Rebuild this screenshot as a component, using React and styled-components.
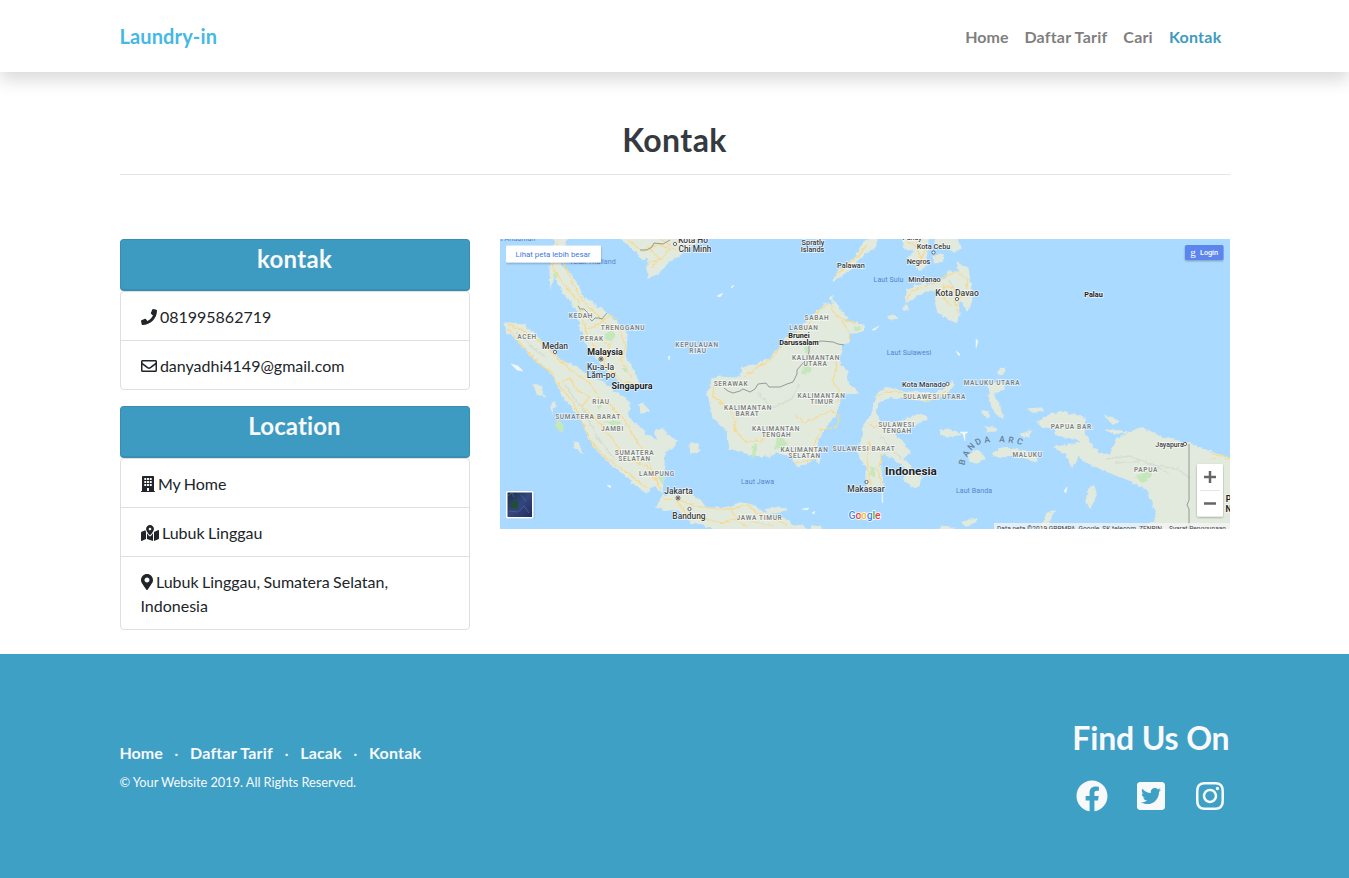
import React from "react";
import styled, { createGlobalStyle } from "styled-components";
import {
  FaPhone, FaRegEnvelope, FaMapMarkedAlt, FaMapMarkerAlt,
  FaFacebook, FaTwitterSquare, FaInstagram,
} from "react-icons/fa";

const GlobalStyle = createGlobalStyle`
  *, *::before, *::after { box-sizing: border-box; }
  body {
    margin: 0;
    background: #fff;
    color: #212529;
    font: 400 16px/1.5 Lato, "Liberation Sans", sans-serif;
    font-variant-ligatures: none;
  }
  a { color: inherit; text-decoration: none; }
`;

const Container = styled.div`
  width: 1140px;
  margin: 0 auto;
  padding: 0 15px;
`;

const Navbar = styled.nav`
  height: 72px;
  background: #fff;
  box-shadow: 0 8px 16px rgba(0, 0, 0, 0.15);
`;

const NavInner = styled(Container)`
  height: 72px;
  display: flex;
  align-items: center;
  justify-content: space-between;
`;

const Brand = styled.a`
  color: #45b8e4;
  font-size: 20px;
  font-weight: 700;
  line-height: 30px;
  letter-spacing: 0.13px;
`;

const NavLinks = styled.div`
  display: flex;
  gap: 16px;
  padding: 2px 8px 0 0;
`;

const NavLink = styled.a`
  font-weight: 700;
  letter-spacing: ${(p) => p.$spacing || 0}px;
  color: ${(p) => (p.$active ? "#3d9bc1" : "#7f7f7f")};
`;

const Title = styled.h2`
  margin: 0;
  padding: 48px 0 14px;
  border-bottom: 1px solid #e5e5e5;
  color: #343a40;
  font-size: 32px;
  font-weight: 700;
  line-height: 40px;
  letter-spacing: 0.4px;
  text-align: center;
`;

const Columns = styled.div`
  display: grid;
  grid-template-columns: 350px 730px;
  gap: 30px;
  align-items: start;
  padding: 64px 0 24px;
`;

const Side = styled.div`
  display: flex;
  flex-direction: column;
  gap: 16px;
`;

const PanelTitle = styled.h4`
  height: 52px;
  margin: 0;
  padding-top: 4px;
  border: 1px solid #378eb1;
  border-bottom-width: 2px;
  border-radius: 4px;
  background: #3d9bc1;
  color: #f8f9fa;
  font-size: 24px;
  line-height: 29px;
  letter-spacing: ${(p) => p.$spacing || 0}px;
  text-align: center;
`;

const List = styled.ul`
  margin: 0;
  padding: 0;
  list-style: none;
  border: 1px solid #dfdfdf;
  border-radius: 4px;
`;

const Item = styled.li`
  padding: 13px 20px 11px;
  word-spacing: -0.7px;
  & + & { border-top: 1px solid #dfdfdf; }
  svg {
    width: ${(p) => p.$icon || 16}px;
    height: 16px;
    vertical-align: -2px;
  }
`;

const MapFrame = styled.div`
  height: 290px;
  overflow: hidden;
  svg { display: block; }
`;

const Footer = styled.footer`
  height: 224px;
  background: #3fa0c6;
  color: #f8f9fa;
`;

const FooterInner = styled(Container)`
  display: flex;
  justify-content: space-between;
  padding-top: 64px;
`;

const FooterLeft = styled.div`
  padding-top: 23px;
`;

const FooterLinks = styled.div`
  display: flex;
  gap: 11.6px;
`;

const FooterLink = styled.a`
  font-weight: 700;
  letter-spacing: ${(p) => p.$spacing || 0}px;
`;

const Copyright = styled.p`
  margin: 7px 0 0;
  font-size: 12.8px;
  line-height: 20px;
  word-spacing: -0.2px;
`;

const Find = styled.h2`
  margin: 0;
  font-size: 32px;
  line-height: 40px;
  font-weight: 700;
  letter-spacing: -0.15px;
  text-align: right;
`;

const Socials = styled.div`
  display: flex;
  justify-content: flex-end;
  gap: 19px;
  margin-top: 22px;
`;

const Social = styled.a`
  width: 40px;
  height: 32px;
  display: flex;
  justify-content: center;
`;

const MapText = styled.text`
  font-family: Roboto, sans-serif;
  font-size: ${(p) => p.$size || 7.6}px;
  font-weight: ${(p) => p.$weight || 500};
  fill: ${(p) => p.$fill || "#3c3c3c"};
  letter-spacing: ${(p) => p.$spacing || 0}px;
  text-anchor: middle;
  paint-order: stroke;
  stroke: ${(p) => p.$halo || "rgba(255,255,255,.7)"};
  stroke-width: 1.5px;
`;

const land = [
  // Thailand and the Malay peninsula
  "M555 239L553 252 550 268 551 288 554 275 562 290 572 303 578 310 580 325 587 345 597 358 610 375 622 383 640 386 634 372 625 357 627 335 620 325 613 320 603 310 592 303 583 298 578 285 568 272 560 265 561 252 567 239Z",
  // Vietnam
  "M622 239L630 246 637 252 642 259 648 258 648 278 660 272 668 262 677 257 690 247 700 239Z",
  // Sumatra
  "M505 323L513 324 523 325 537 337 550 350 563 362 577 367 590 378 603 382 611 390 618 394 630 403 628 417 642 430 648 435 665 447 663 477 662 493 655 485 647 492 637 486 627 477 610 463 597 450 588 437 582 417 572 407 563 397 557 382 547 368 533 358 520 343 507 332Z",
  // Java
  "M657 507L663 495 673 496 687 492 700 500 705 507 732 508 738 502 755 506 762 513 777 517 791 522 791 530 713 530 704 524 690 522 680 511 667 510Z",
  "M765 510L775 508 787 509 780 512 768 513Z",
  // Borneo
  "M712 380L718 377 730 378 741 378 743 368 755 365 768 360 780 348 787 337 800 330 813 315 827 303 832 306 834 300 840 310 847 317 843 322 852 322 863 325 862 332 847 333 850 341 840 343 842 352 837 358 842 366 847 372 848 383 858 393 840 394 837 413 823 430 817 443 819 463 815 459 797 467 793 457 777 452 768 456 753 455 730 448 727 430 713 417 708 393Z",
  // Sulawesi
  "M875 400L878 393 887 388 903 392 937 393 952 382 953 386 945 395 930 401 893 397 880 400 875 412 880 422 897 423 918 415 927 418 917 423 903 430 892 432 900 440 910 452 903 458 911 467 907 475 922 477 917 488 903 480 909 470 900 463 888 455 883 452 880 460 883 487 867 488 867 467 860 458 858 450 863 437 864 425 872 415Z",
  // Mindanao
  "M905 303L908 290 923 283 933 285 947 278 948 272 960 272 957 262 968 268 970 283 973 297 967 310 963 303 957 300 960 313 955 322 938 312 935 300 940 290 927 290 918 294 912 300Z",
  "M903 239L928 239 927 250 925 268 919 270 916 263 908 260 914 250 905 249Z",
  "M935 239L957 239 961 248 954 252 948 246 937 248Z",
  "M933 257L942 254 944 259 936 263Z",
  "M833 280L840 270 847 265 858 254 864 243 869 239 877 239 875 248 868 250 861 257 850 269 839 277Z",
  // New Guinea
  "M1042 427L1043 418 1060 412 1085 418 1083 430 1088 440 1098 453 1110 455 1118 438 1142 428 1163 438 1187 443 1213 453 1231 460 1231 530 1140 530 1155 520 1157 513 1147 490 1130 480 1103 470 1083 460 1079 455 1072 467 1067 455 1055 447 1073 445 1083 440 1057 435 1055 428Z",
  // Halmahera
  "M989 387L994 383 1003 382 1004 389 993 394 998 402 1003 418 996 414 990 400Z",
  // Seram
  "M993 454L1000 448 1011 449 1024 451 1034 454 1037 461 1022 457 1010 455 998 457Z",
  "M968 456L974 451 982 453 984 458 977 463 970 461Z",
  "M941 430L952 431 962 434 951 436 941 435Z",
  "M985 427L994 428 997 431 987 431Z",
  "M1022 434L1031 431 1029 436 1023 437Z",
  "M1028 409L1042 408 1044 411 1034 412Z",
  "M1037 422L1050 416 1052 428 1044 428Z",
  "M1105 416L1113 418 1120 422 1111 423Z",
  "M1106 430L1117 431 1127 432 1117 434Z",
  "M1089 488L1094 486 1096 494 1091 508 1086 502Z",
  "M1042 524L1047 514 1054 511 1049 522 1046 530 1040 530Z",
  "M655 432L663 428 667 436 677 440 673 448 665 450 657 440Z",
  "M534 384L541 387 544 397 537 393Z",
  "M551 405L555 403 556 406 553 408 552 413Z",
  "M574 442L578 444 582 453 578 450Z",
  "M640 404L645 406 648 411 641 413Z",
  "M690 444L698 444 699 451 691 453Z",
  "M902 308L907 305 908 309 904 311Z",
  "M888 317L894 315 897 318 890 319Z",
  "M998 373L1001 368 1005 369 1003 375Z",
  "M982 411L989 412 989 417 984 416Z",
  "M962 523L972 519 977 520 973 524 966 526Z",
  "M942 526L954 528 948 530 940 530Z",
  "M791 525L803 526 809 530 793 530Z",
  "M812 526L820 527 824 530 811 530Z",
  "M860 328L864 326 863 330 860 331Z",
  "M830 299L833 296 832 301Z",
];

const greens = [
  "M554 273L558 272 557 278 553 277Z",
  "M604 334L612 331 617 335 611 341 605 340Z",
  "M621 369L627 367 628 371 623 372Z",
  "M556 420L560 420 565 430 560 432 556 426Z",
  "M603 422L612 420 622 423 618 425 608 424Z",
  "M658 477L663 476 663 484 660 481Z",
  "M597 406L601 405 602 409 598 408Z",
  "M753 445L756 444 756 457 752 458Z",
  "M777 437L783 437 787 444 782 450 775 448Z",
  "M803 367L810 366 812 371 805 375 801 373Z",
  "M804 348L809 347 807 354 804 353Z",
  "M853 327L862 326 860 330 854 331Z",
  "M871 467L875 466 875 477 870 475Z",
  "M925 400L934 398 931 401 926 402Z",
  "M1135 477L1145 472 1153 473 1150 478 1143 484Z",
];

const roads = [
  "M558 241L556 258 552 266 558 276 568 290 578 300 583 318 586 332 596 350 607 367 620 380 638 385",
  "M562 260L570 278 582 300 604 322 620 331 625 345 621 360 632 378",
  "M585 330L598 325 611 315 617 320",
  "M597 339L610 345 605 360",
  "M508 325L524 331 540 342 556 357 572 371 590 383 598 397 606 402 623 418 635 438 645 455 661 490",
  "M508 329L520 343 538 363 552 373 559 385 573 402 582 421 590 440 606 458 625 471 648 489",
  "M561 382L571 379 577 390 590 397 582 406 600 424 612 438 624 457 646 466 660 488",
  "M663 499L680 500 695 506 716 509 733 509 747 505 761 516 774 519 786 524",
  "M676 500L686 514 704 519 724 523 738 517 759 523 775 526",
  "M731 509L735 518 746 526",
  "M714 383L713 396 730 410 736 421 734 430 747 442 762 441 770 431",
  "M743 377L757 368 772 358 790 337 806 327 818 312 829 303",
  "M831 306L836 316 848 321 857 323M842 321L848 331 850 340",
  "M817 417L830 411 839 415 836 427 821 430 814 445 816 459 795 463",
  "M834 355L837 366 833 380 839 392 837 403M794 415L804 422 817 418",
  "M877 397L886 391 903 393 918 398 933 400 946 391",
  "M868 424L874 427 887 425M870 442L867 459 870 486M882 454L878 470 881 486",
  "M907 301L911 291 925 287 936 282 944 277 956 272 968 279 966 294 955 301 958 314",
  "M944 283L942 297 951 306 960 304M938 296L948 286 960 294",
  "M835 277L846 266 858 256 867 245",
  "M907 241L917 246 921 260 916 266M916 242L925 249 921 262",
  "M629 241L642 251 659 244 670 249 663 258 647 264M648 248L659 258 652 268M661 239L676 250",
  "M1211 453L1230 459M1211 460L1216 458",
];

const borders = [
  "M578 306L580 309 584 309 588 313 588 317 592 321 595 318 599 318 602 319 607 313",
  "M640 250L647 250 652 247 654 243 663 244 670 240",
  "M724 388L728 391 733 393 740 391 743 389 750 392 755 389 758 384 766 383 769 387 780 387 787 384 793 382 797 374 797 370 803 363 807 359 809 352 809 343 822 341 833 342 838 344 844 345",
  "M1189 444L1189 500 1187 505 1189 509 1189 529",
];

const reefs = [
  "M511 364L518 366 523 371 517 370Z", "M607 485L611 486 610 488Z", "M717 296L723 293 720 297Z",
  "M872 330L879 326 875 330Z", "M956 351L960 354 959 356Z", "M976 339L978 341 976 348Z",
  "M960 432L968 432 965 434 965 441 963 434Z", "M731 287L734 285 732 288Z", "M1064 491L1067 487 1066 493Z",
  "M802 509L809 508 807 510Z", "M668 357L670 356 669 360Z", "M882 491L883 503 882 501Z",
  "M812 513L815 511 814 514Z",
];

// [text, x, baseline, size]
const regions = [
  ["KEDAH", 581, 317.5], ["TRENGGANU", 623, 329.5], ["PERAK", 592, 340.5], ["ACEH", 527, 338.5],
  ["KEPULAUAN", 697, 347], ["RIAU", 698, 353], ["SABAH", 817, 319.5], ["LABUAN", 804, 330],
  ["KALIMANTAN", 816, 359.5], ["UTARA", 815.5, 366], ["SERAWAK", 731, 385.5],
  ["KALIMANTAN", 821.5, 397.5], ["TIMUR", 822, 403.5], ["KALIMANTAN", 748, 409.5], ["BARAT", 747.5, 415.5],
  ["KALIMANTAN", 776, 430.5], ["TENGAH", 776.5, 436.5], ["KALIMANTAN", 804.5, 451.5], ["SELATAN", 804.5, 457.5],
  ["SULAWESI BARAT", 864, 450.5], ["SULAWESI", 896.5, 426.5], ["TENGAH", 897, 432.5],
  ["SULAWESI UTARA", 934.5, 399], ["MALUKU UTARA", 992, 384.5], ["MALUKU", 1027.5, 456.5],
  ["PAPUA BAR.", 1072.5, 428.5], ["PAPUA", 1146, 471.5], ["RIAU", 601, 403.5], ["SUMATERA BARAT", 588, 419],
  ["JAMBI", 612.5, 430.5], ["SUMATERA", 634.5, 454.5], ["SELATAN", 634.5, 460.5], ["LAMPUNG", 657, 476],
  ["JAWA TIMUR", 759.5, 520],
];

const seas = [
  ["Teluk Thailand", 592.5, 263.5], ["Laut Andaman", 512, 240.5], ["Laut Sulu", 888.5, 282],
  ["Laut Sulawesi", 909, 355], ["Laut Jawa", 757.5, 484], ["Laut Banda", 974, 493],
];

const places = [
  ["Kota Ho", 693, 243, 8.3], ["Chi Minh", 695, 251.5, 8.3], ["Spratly", 813, 245, 7.3], ["Islands", 812.5, 252, 7.3],
  ["Palawan", 851, 268, 7.3], ["Panay", 912, 240, 7], ["Kota Cebu", 933.5, 249, 7.3], ["Negros", 918.5, 264, 7.3],
  ["Mindanao", 924.5, 282, 7.3], ["Kota Davao", 957, 296, 8.6], ["Medan", 555, 349, 8.5],
  ["Ku-a-la", 600.5, 369.5, 8.5], ["Lăm-pơ", 601, 378, 8.4], ["Kota Manado", 924, 387, 7.4],
  ["Jayapura", 1169.5, 446.5, 6.9], ["Makassar", 866, 492, 8.5], ["Jakarta", 678.5, 494, 8.4], ["Bandung", 689, 518.5, 8.4],
];

const countries = [
  ["Malaysia", 605, 354.5, 8.9], ["Singapura", 632, 389, 9], ["Brunei", 799, 338, 7.3],
  ["Darussalam", 799, 345, 7.4], ["Indonesia", 911, 475, 11.8], ["Palau", 1093.5, 297, 7.3],
  ["P", 1228.5, 502, 8.5], ["N", 1228.5, 511.5, 8.5],
];

const arc = [
  ["B", 962, 462, -75], ["A", 966, 453.5, -58], ["N", 971, 446.5, -45], ["D", 978, 441.5, -28],
  ["A", 987, 439.5, -10], ["A", 1002, 439, 5], ["R", 1011, 440, 12], ["C", 1020, 441.5, 20],
];

const dots = [[555, 352], [675, 244], [933.5, 252.5], [957, 299], [947.5, 384], [1185, 444], [866.5, 482], [689.5, 509]];
const capitals = [[601, 359], [678, 498]];

function IndonesiaMap() {
  return (
    <svg width="730" height="290" viewBox="500 239 730 290" role="img" aria-label="Indonesia">
      <defs>
        <filter id="coast" x="-5%" y="-5%" width="110%" height="110%">
          <feTurbulence type="fractalNoise" baseFrequency="0.22" numOctaves="2" seed="4" />
          <feDisplacementMap in="SourceGraphic" scale="4.5" xChannelSelector="R" yChannelSelector="G" />
        </filter>
        <filter id="shade" x="0" y="0" width="100%" height="100%">
          <feDropShadow dx="0" dy="1" stdDeviation="1" floodOpacity=".3" />
        </filter>
        <linearGradient id="satellite" x1="0" y1="0" x2="1" y2="1">
          <stop offset="0" stopColor="#1d3044" />
          <stop offset=".5" stopColor="#34477e" />
          <stop offset="1" stopColor="#202c5d" />
        </linearGradient>
      </defs>
      <rect x="500" y="239" width="730" height="290" fill="#aadaff" />
      <g filter="url(#coast)">
        {land.map((d) => <path key={d} d={d} fill="#e2e9dd" stroke="#e2e9dd" strokeWidth="1.4" strokeLinejoin="round" />)}
        {greens.map((d) => <path key={d} d={d} fill="#c5e8bb" />)}
        <g fill="none" stroke="#cfd5cb" strokeWidth="1.4" opacity=".6">
          <path d="M516 331L530 345 547 358M565 385L584 411 597 437 615 460M1106 459L1130 456 1150 464 1178 469 1190 478M1115 463L1145 461 1170 474M880 436L890 447 901 459M757 392L772 408 791 399 800 384M949 280L955 291" />
        </g>
      </g>
      <g fill="none" stroke="#f9d98c" strokeWidth="1.2" strokeLinejoin="round" filter="url(#coast)">
        {roads.map((d) => <path key={d} d={d} />)}
      </g>
      <g fill="none" stroke="#8d918d" strokeWidth=".9">
        {borders.map((d) => <path key={d} d={d} />)}
      </g>
      {reefs.map((d) => <path key={d} d={d} fill="#f3f8f5" stroke="#f3f8f5" strokeWidth=".5" />)}
      {regions.map(([t, x, y]) => (
        <MapText key={t + x} x={x} y={y} $size={6.5} $weight={600} $fill="#7c817f" $spacing={0.68}>{t}</MapText>
      ))}
      {seas.map(([t, x, y]) => (
        <MapText key={t} x={x} y={y} $size={7.1} $weight={400} $fill="#5585cc" $halo="transparent" $spacing={0.05}>{t}</MapText>
      ))}
      {places.map(([t, x, y, s]) => <MapText key={t} x={x} y={y} $size={s}>{t}</MapText>)}
      {countries.map(([t, x, y, s]) => (
        <MapText key={t} x={x} y={y} $size={s} $weight={700} $fill="#222">{t}</MapText>
      ))}
      {arc.map(([t, x, y, r]) => (
        <MapText key={t + x} x={x} y={y + 3} transform={`rotate(${r} ${x} ${y})`} $size={8.6} $fill="#667f95" $weight={500} $halo="transparent">{t}</MapText>
      ))}
      {dots.map(([x, y]) => <circle key={x} cx={x} cy={y} r="1.6" fill="#fff" stroke="#444" strokeWidth=".8" />)}
      {capitals.map(([x, y]) => (
        <g key={x}><circle cx={x} cy={y} r="2" fill="#fff" stroke="#444" strokeWidth=".8" /><circle cx={x} cy={y} r="1" fill="#333" /></g>
      ))}
      <text x="864.5" y="519" textAnchor="middle" fontFamily="Roboto" fontSize="10.5" fontWeight="500" stroke="#fff" strokeWidth="1.5" paintOrder="stroke" textLength="32">
        <tspan fill="#4285f4">G</tspan><tspan fill="#ea4335">o</tspan><tspan fill="#fbbc05">o</tspan><tspan fill="#4285f4">g</tspan><tspan fill="#34a853">l</tspan><tspan fill="#ea4335">e</tspan>
      </text>
      <rect x="994" y="523" width="236" height="6" fill="#f5f5f5" opacity=".75" />
      <text x="997" y="530.5" fontFamily="Roboto" fontSize="6.6" fill="#444" textLength="165">Data peta ©2019 GBRMPA, Google, SK telecom, ZENRIN</text>
      <text x="1169" y="530.5" fontFamily="Roboto" fontSize="6.6" fill="#444" textLength="57">Syarat Penggunaan</text>
      <g filter="url(#shade)">
        <rect x="506" y="245.5" width="95" height="17" rx="1" fill="#fff" />
        <rect x="1185" y="245" width="38.5" height="15" rx="1.5" fill="#5d85ee" />
        <rect x="1197" y="464" width="26" height="52.5" rx="1.5" fill="#fff" />
        <rect x="506" y="491" width="27.5" height="27.5" rx="1.5" fill="#fff" />
      </g>
      <text x="553" y="256.5" textAnchor="middle" fontFamily="Roboto" fontSize="7.9" fill="#3f78e0" textLength="75">Lihat peta lebih besar</text>
      <text x="1193" y="255.5" textAnchor="middle" fontFamily="Liberation Serif" fontSize="11" fill="#fff">g</text>
      <text x="1209" y="255" textAnchor="middle" fontFamily="Roboto" fontSize="7.3" fontWeight="500" fill="#fff" textLength="18">Login</text>
      <path d="M1200 490.5H1220" stroke="#e6e6e6" />
      <path d="M1204 477H1216M1210 471V483M1204 503.5H1216" stroke="#666" strokeWidth="2.5" />
      <rect x="507.5" y="492.5" width="24.5" height="24.5" fill="url(#satellite)" />
      <path d="M510 506L515 500 518 502 518 508 513 509Z" fill="#214f36" />
      <path d="M508 496L512 493 514 497M509 511L518 512 524 506 529 513M521 495L526 501" fill="none" stroke="#4d659c" strokeWidth=".8" />
    </svg>
  );
}

function BuildingIcon() {
  return (
    <svg viewBox="0 0 14 16" fill="currentColor" aria-hidden="true">
      <path
        fillRule="evenodd"
        d="M1.800 0H12.200Q13 0 13 .8V15H13.600Q14 15 14 15.400V16H0V15.400Q0 15 .4 15H1V.8Q1 0 1.800 0ZM3.300 2V4H5.200V2ZM6.050 2V4H7.950V2ZM8.800 2V4H10.700V2ZM3.300 5V7H5.200V5ZM6.050 5V7H7.950V5ZM8.800 5V7H10.700V5ZM3.300 8V10H5.200V8ZM6.050 8V10H7.950V8ZM8.800 8V10H10.700V8ZM6.050 12V15H7.950V12Z"
      />
    </svg>
  );
}

export default function App() {
  return (
    <>
      <GlobalStyle />
      <Navbar>
        <NavInner>
          <Brand href="#">Laundry-in</Brand>
          <NavLinks>
            <NavLink href="#">Home</NavLink>
            <NavLink href="#" $spacing={0.2}>Daftar Tarif</NavLink>
            <NavLink href="#" $spacing={0.2}>Cari</NavLink>
            <NavLink href="#" $active $spacing={0.25}>Kontak</NavLink>
          </NavLinks>
        </NavInner>
      </Navbar>
      <Container>
        <Title>Kontak</Title>
        <Columns>
          <Side>
            <section>
              <PanelTitle $spacing={0.3}>kontak</PanelTitle>
              <List>
                <Item><FaPhone /> 081995862719</Item>
                <Item><FaRegEnvelope /> danyadhi4149@gmail.com</Item>
              </List>
            </section>
            <section>
              <PanelTitle $spacing={0.1}>Location</PanelTitle>
              <List>
                <Item $icon={14}><BuildingIcon /> My Home</Item>
                <Item $icon={18}><FaMapMarkedAlt /> Lubuk Linggau</Item>
                <Item $icon={12}><FaMapMarkerAlt /> Lubuk Linggau, Sumatera Selatan, Indonesia</Item>
              </List>
            </section>
          </Side>
          <MapFrame><IndonesiaMap /></MapFrame>
        </Columns>
      </Container>
      <Footer>
        <FooterInner>
          <FooterLeft>
            <FooterLinks>
              <FooterLink href="#">Home</FooterLink><span>·</span>
              <FooterLink href="#" $spacing={0.2}>Daftar Tarif</FooterLink><span>·</span>
              <FooterLink href="#" $spacing={0.1}>Lacak</FooterLink><span>·</span>
              <FooterLink href="#" $spacing={0.2}>Kontak</FooterLink>
            </FooterLinks>
            <Copyright>© Your Website 2019. All Rights Reserved.</Copyright>
          </FooterLeft>
          <div>
            <Find>Find Us On</Find>
            <Socials>
              <Social href="#"><FaFacebook size={32} /></Social>
              <Social href="#"><FaTwitterSquare size={32} /></Social>
              <Social href="#"><FaInstagram size={32} /></Social>
            </Socials>
          </div>
        </FooterInner>
      </Footer>
    </>
  );
}
